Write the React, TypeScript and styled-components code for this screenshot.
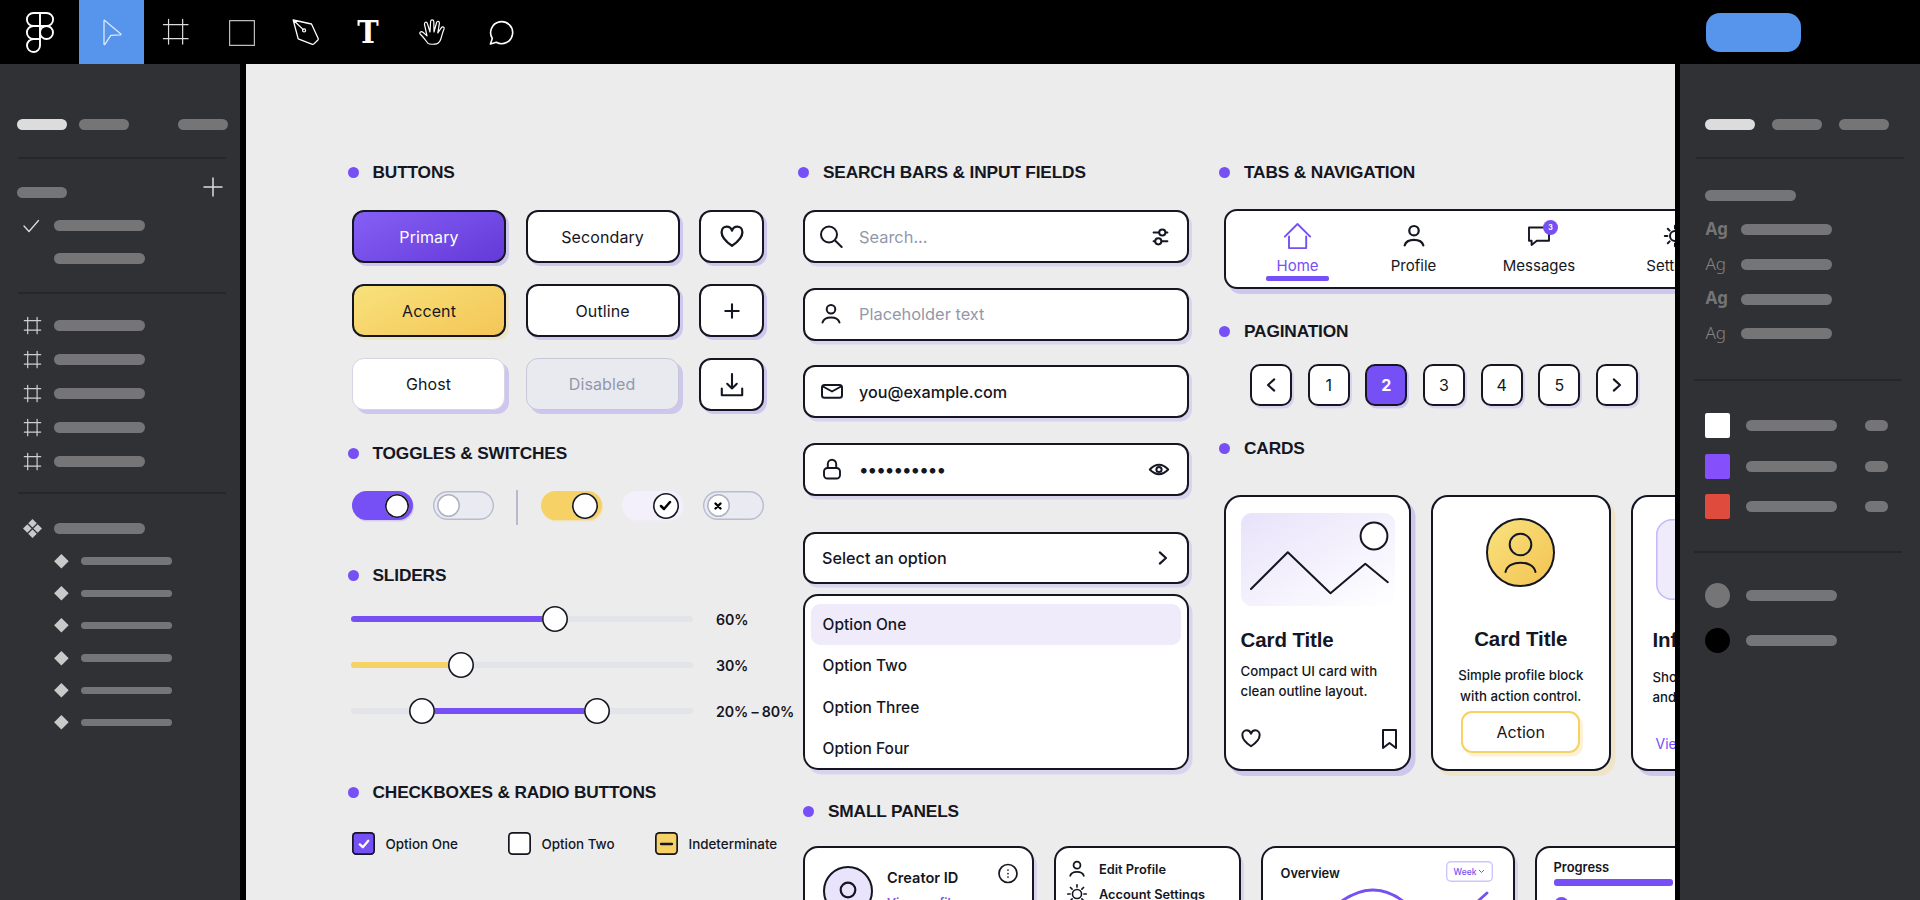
import React from 'react'
import styled, { createGlobalStyle, css } from 'styled-components'

const INK = '#141622'
const VIOLET = '#764ff5'
const LILAC = '#cfc6ee'
const PALE_LILAC = '#d9d3ee'
const YELLOW = '#f6d165'
const SAND = '#f0e4c8'
const MUTED = '#9297ab'

const GlobalStyle = createGlobalStyle`
  * {
    box-sizing: border-box;
  }

  body {
    margin: 0;
    overflow: hidden;
    background: #000;
    color: ${INK};
    font-family: Inter, 'Liberation Sans', sans-serif;
  }

  svg {
    display: block;
    flex: none;
    overflow: visible;
  }
`

/* ---------- shell ---------- */

const Shell = styled.div`
  display: grid;
  grid-template-columns: 240px 1429px 240px;
  grid-template-rows: 64px 836px;
  column-gap: 5.5px;
  width: 1920px;
  height: 900px;
  background: #000;
`

const Toolbar = styled.header`
  grid-column: 1 / -1;
  display: flex;
  align-items: flex-start;
  height: 64px;
  background: #000;
`

const Tool = styled.div<{ $width: number; $active?: boolean }>`
  display: flex;
  align-items: center;
  justify-content: center;
  width: ${p => p.$width}px;
  height: 64px;
  background: ${p => (p.$active ? '#5794ec' : 'transparent')};
`

const TextTool = styled.span`
  color: #fff;
  font-family: 'DejaVu Serif', serif;
  font-stretch: condensed;
  font-size: 32px;
  font-weight: 700;
  line-height: 64px;
`

const ShareButton = styled.div`
  width: 95px;
  height: 39px;
  margin: 12.5px 119.5px 0 auto;
  border-radius: 14px;
  background: #5794ec;
`

const SidePanel = styled.aside<{ $side: 'left' | 'right' }>`
  height: 836px;
  padding: ${p => (p.$side === 'left' ? '55px 12px 0 17px' : '55px 16px 0 25.4px')};
  background: #303134;
`

const Bar = styled.span<{ $width?: number; $height?: number; $bright?: boolean }>`
  display: block;
  flex: none;
  width: ${p => p.$width ?? 91}px;
  height: ${p => p.$height ?? 11}px;
  border-radius: 6px;
  background: ${p => (p.$bright ? '#dcdcdc' : '#757476')};
`

const PanelTabs = styled.div<{ $gap: number }>`
  display: flex;
  gap: ${p => p.$gap}px;

  & > .push {
    margin-left: auto;
  }
`

const PanelRule = styled.hr<{ $top: number; $indent?: number }>`
  width: 208px;
  height: 2px;
  margin: ${p => p.$top}px 0 0 ${p => p.$indent ?? 1}px;
  border: 0;
  background: #26272a;
`

const PanelRows = styled.div<{ $top: number; $row: number; $indent?: number }>`
  display: grid;
  grid-auto-rows: ${p => p.$row}px;
  margin-top: ${p => p.$top}px;
  padding-left: ${p => p.$indent ?? 0}px;
`

const PanelRow = styled.div<{ $icon: number }>`
  display: grid;
  grid-template-columns: ${p => p.$icon}px auto 1fr;
  align-items: center;
`

const PageHeader = styled.div`
  display: flex;
  justify-content: space-between;
  align-items: flex-start;
  height: 20px;
  margin-top: 19px;
  padding-right: 6px;

  & > span {
    margin-top: 9px;
  }
`

const Ag = styled.span<{ $bold?: boolean }>`
  padding-bottom: 2px;
  color: ${p => (p.$bold ? '#757476' : '#858487')};
  font-family: 'Noto Sans', sans-serif;
  font-size: 17px;
  font-weight: ${p => (p.$bold ? 700 : 300)};
  line-height: 20px;
`

const Swatch = styled.span<{ $color: string; $round?: boolean }>`
  width: 25px;
  height: 25px;
  border-radius: ${p => (p.$round ? '50%' : '2px')};
  background: ${p => p.$color};
`

const ShortBar = styled(Bar)`
  margin-left: 28px;
`

/* ---------- canvas ---------- */

const Canvas = styled.main`
  display: flex;
  height: 836px;
  padding: 97px 0 0 102px;
  overflow: hidden;
  background: #ececec;
`

const Column = styled.section<{ $width: number }>`
  flex: none;
  width: ${p => p.$width}px;
`

const Wide = styled.div`
  flex: none;
  width: 1100px;
`

const Split = styled.div`
  display: flex;
  height: 610px;
`

const Title = styled.h2<{ $top?: number }>`
  display: flex;
  align-items: center;
  gap: 14px;
  height: 23px;
  margin: ${p => p.$top ?? 0}px 0 0;
  font-family: 'Liberation Sans', Arial, sans-serif;
  font-size: 17.3px;
  font-weight: 700;
  letter-spacing: -0.16px;
  line-height: 23px;
  white-space: nowrap;

  &::before {
    content: '';
    width: 11px;
    height: 11px;
    border-radius: 50%;
    background: ${VIOLET};
  }
`

const ButtonGrid = styled.div`
  display: grid;
  grid-template-columns: 154px 154px 65px;
  grid-auto-rows: 53px;
  gap: 21px 19.6px;
  margin: 26px 0 0 4.5px;
`

const buttonTones = {
  plain: css`
    background: #fff;
  `,
  primary: css`
    background: linear-gradient(155deg, #8560f5, #6439d8);
    color: #fff;
  `,
  accent: css`
    background: linear-gradient(155deg, #f8e17c, #f4c656);
    box-shadow: 3px 3px 0 ${SAND};
  `,
  ghost: css`
    margin: 0 1px 1px 0;
    border: 1px solid #d7d4e6;
    background: #fff;
    box-shadow: 4px 4px 0 ${LILAC};
  `,
  disabled: css`
    margin: 0 1px 1px 0;
    border: 1px solid #c5c7d6;
    background: #e9eaf0;
    box-shadow: 4px 4px 0 ${LILAC};
    color: ${MUTED};
  `,
}

const Button = styled.div<{ $tone?: keyof typeof buttonTones }>`
  display: flex;
  align-items: center;
  justify-content: center;
  border: 2px solid ${INK};
  border-radius: 12px;
  box-shadow: 3px 3px 0 ${LILAC};
  font-size: 16px;
  letter-spacing: 0.1px;
  ${p => buttonTones[p.$tone ?? 'plain']}
`

const ToggleRow = styled.div`
  display: flex;
  align-items: flex-start;
  height: 29px;
  margin: 26px 0 0 4.5px;
`

const ToggleRule = styled.span`
  width: 1.5px;
  height: 35px;
  margin: -1px 23px 0 2px;
  background: #b8bacb;
`

const Toggle = styled.div<{ $fill: string; $glow: string; $off?: boolean }>`
  display: flex;
  align-items: center;
  justify-content: ${p => (p.$off ? 'flex-start' : 'flex-end')};
  width: 61px;
  height: 29px;
  margin-right: 20px;
  padding: 0 4px;
  border-radius: 15px;
  background: ${p => p.$fill};
  box-shadow: ${p => (p.$off ? 'inset 0 0 0 1.4px #b8bccd' : `1px 1.5px 0 ${p.$glow}`)};
`

const Knob = styled.span<{ $size: number; $dim?: boolean }>`
  display: flex;
  align-items: center;
  justify-content: center;
  flex: none;
  width: ${p => p.$size}px;
  height: ${p => p.$size}px;
  border-radius: 50%;
  background: #fff;
  box-shadow: inset 0 0 0 1.6px ${p => (p.$dim ? '#aeb2c5' : INK)};
`

const Sliders = styled.div`
  margin: 9.5px 0 0 3px;
`

const SliderRow = styled.div`
  display: flex;
  align-items: center;
  gap: 23.5px;
  height: 45.7px;
`

const Track = styled.div`
  position: relative;
  width: 342px;
  height: 6px;
  border-radius: 3px;
  background: #e3e3ea;
`

const Fill = styled.span<{ $color: string }>`
  position: absolute;
  top: 0;
  height: 6px;
  border-radius: 3px;
  background: ${p => p.$color};
`

const Handle = styled(Knob)`
  position: absolute;
  top: -10px;
  transform: translateX(-50%);
`

const SliderValue = styled.span`
  padding-top: 1px;
  font-size: 14.2px;
  font-weight: 600;
  letter-spacing: -0.15px;
  white-space: nowrap;
`

const CheckRow = styled.div`
  display: flex;
  margin: 28px 0 0 4.5px;
`

const CheckItem = styled.label<{ $width: number }>`
  display: flex;
  align-items: center;
  gap: 10.5px;
  width: ${p => p.$width}px;
  font-size: 13.4px;
  font-weight: 500;
  white-space: nowrap;
`

const Box = styled.span<{ $color: string }>`
  display: flex;
  align-items: center;
  justify-content: center;
  width: 23px;
  height: 23px;
  border-radius: 4.5px;
  background: ${p => p.$color};
  box-shadow: inset 0 0 0 1.7px ${INK};
`

/* ---------- inputs ---------- */

const Fields = styled.div`
  display: grid;
  gap: 24.6px;
  width: 386px;
  margin: 26px 0 0 5px;
`

const Field = styled.div`
  display: grid;
  grid-template-columns: 22px 1fr auto;
  column-gap: 16px;
  align-items: center;
  height: 53px;
  padding: 0 19px 0 16px;
  border: 2px solid ${INK};
  border-radius: 12px;
  background: #fff;
  box-shadow: 3px 3.5px 0 ${PALE_LILAC};
`

const FieldText = styled.span<{ $muted?: boolean }>`
  color: ${p => (p.$muted ? MUTED : INK)};
  font-size: ${p => (p.$muted ? 16.4 : 16.2)}px;
  font-weight: ${p => (p.$muted ? 400 : 500)};
`

const Password = styled(FieldText)`
  font-size: 18px;
  letter-spacing: -1px;
`

const Select = styled(Field)`
  grid-template-columns: 1fr auto;
  height: 52px;
  width: 386px;
  margin: 36px 0 0 5px;
  padding: 0 20px 0 17px;
`

const Menu = styled.div`
  width: 386px;
  height: 175.5px;
  margin: 10.5px 0 0 5px;
  padding: 8px 6px;
  border: 2px solid ${INK};
  border-radius: 15px;
  background: #fff;
  box-shadow: 3.5px 4.5px 0 ${PALE_LILAC};
`

const MenuItem = styled.div<{ $selected?: boolean }>`
  display: flex;
  align-items: center;
  height: 41.1px;
  padding-left: 11.5px;
  border-radius: 9px;
  background: ${p => (p.$selected ? '#efebfa' : 'transparent')};
  font-size: 15.5px;
  font-weight: 500;
`

/* ---------- navigation ---------- */

const TabBar = styled.nav`
  display: flex;
  width: 560px;
  height: 80px;
  margin: 25px 0 0 5px;
  padding-left: 8px;
  border: 2px solid ${INK};
  border-radius: 13px;
  background: #fff;
  box-shadow: 4px 5px 0 ${LILAC};
`

const Tab = styled.div<{ $width: number; $active?: boolean }>`
  display: flex;
  flex-direction: column;
  align-items: center;
  width: ${p => p.$width}px;
  color: ${p => (p.$active ? VIOLET : INK)};
  font-size: 15px;
  line-height: 20px;

  &::after {
    content: '';
    width: 63px;
    height: 5px;
    border-radius: 2px;
    background: ${p => (p.$active ? VIOLET : 'transparent')};
  }
`

const TabIcon = styled.span`
  position: relative;
  display: flex;
  align-items: center;
  justify-content: center;
  height: 44.5px;
  padding-top: 6px;
`

const Badge = styled.span`
  position: absolute;
  top: 8.5px;
  right: -8px;
  width: 15px;
  height: 15px;
  border-radius: 50%;
  background: ${VIOLET};
  color: #fff;
  font-size: 7px;
  font-weight: 700;
  line-height: 15px;
  text-align: center;
`

const Pages = styled.div`
  display: flex;
  gap: 15.7px;
  margin: 21px 0 0 31px;
`

const Page = styled.div<{ $active?: boolean }>`
  display: flex;
  align-items: center;
  justify-content: center;
  width: 42px;
  height: 42px;
  border: 2px solid ${INK};
  border-radius: 10px;
  background: ${p => (p.$active ? VIOLET : '#fff')};
  box-shadow: 2px 2.5px 0 ${p => (p.$active ? LILAC : PALE_LILAC)};
  color: ${p => (p.$active ? '#fff' : INK)};
  font-size: 16px;
  font-weight: ${p => (p.$active ? 700 : 400)};
`

/* ---------- cards ---------- */

const Cards = styled.div`
  display: flex;
  gap: 20px;
  margin: 35px 0 0 5px;
`

const Card = styled.article<{ $width: number; $shadow?: string; $center?: boolean }>`
  display: flex;
  flex-direction: column;
  align-items: ${p => (p.$center ? 'center' : 'flex-start')};
  flex: none;
  width: ${p => p.$width}px;
  height: 276px;
  border: 2px solid ${INK};
  border-radius: 17px;
  background: #fff;
  box-shadow: 4.5px 5px 0 ${p => p.$shadow ?? LILAC};
  text-align: ${p => (p.$center ? 'center' : 'left')};
`

const CardTitle = styled.h3<{ $top: number }>`
  margin: ${p => p.$top}px 0 0;
  font-family: 'Liberation Sans', Arial, sans-serif;
  font-size: 20.5px;
  font-weight: 700;
  letter-spacing: -0.1px;
  line-height: 24px;
  white-space: nowrap;
`

const CardText = styled.p<{ $top: number; $leading: number }>`
  margin: ${p => p.$top}px 0 0;
  font-size: 13.25px;
  font-weight: 500;
  line-height: ${p => p.$leading}px;
  white-space: nowrap;
`

const MediaCard = styled(Card)`
  padding: 16px 12px 0 14.5px;
`

const Picture = styled.div`
  width: 154px;
  height: 93px;
  border-radius: 11px;
  background: linear-gradient(150deg, #e8e2fa, #fff);
`

const CardFooter = styled.div`
  display: flex;
  justify-content: space-between;
  width: 156.5px;
  margin-top: 28px;
`

const Avatar = styled.div`
  display: flex;
  align-items: center;
  justify-content: center;
  width: 69px;
  height: 69px;
  margin-top: 21px;
  border: 2px solid ${INK};
  border-radius: 50%;
  background: linear-gradient(135deg, #f9e27e, #f3c352);
`

const ActionButton = styled.div`
  width: 119px;
  height: 42px;
  margin-top: 4.5px;
  border: 2px solid #f6d165;
  border-radius: 11px;
  box-shadow: 3px 3.5px 0 #fdf2d6;
  font-size: 16px;
  line-height: 39px;
`

const InfoCard = styled(Card)`
  padding-left: 20px;
`

const InfoTile = styled.div`
  width: 96px;
  height: 81px;
  margin: 22px 0 0 3px;
  border-radius: 16px;
  background: #efebfa;
  box-shadow: inset 0 0 0 1.5px #c5b9fb;
`

const CardLink = styled.a`
  margin: 26px 0 0 3px;
  color: ${VIOLET};
  font-size: 14px;
  line-height: 20px;
`

/* ---------- small panels ---------- */

const PanelTitle = styled(Title)`
  margin-left: 5px;
`

const SmallPanels = styled.div`
  display: flex;
  gap: 20px;
  margin: 23px 0 0 5px;
`

const SmallPanel = styled.article<{ $width: number; $pad: string }>`
  flex: none;
  width: ${p => p.$width}px;
  height: 150px;
  padding: ${p => p.$pad};
  border: 2px solid ${INK};
  border-radius: 15px;
  background: #fff;
  box-shadow: 3px 5px 0 ${PALE_LILAC};
`

const Creator = styled.div`
  display: grid;
  grid-template-columns: 50px 1fr 20px;
  column-gap: 14px;
  align-items: start;
`

const CreatorAvatar = styled.div`
  display: flex;
  align-items: center;
  justify-content: center;
  width: 50px;
  height: 50px;
  border: 2px solid ${INK};
  border-radius: 50%;
  background: #e9e3fb;
`

const CreatorName = styled.div`
  font-size: 14.6px;
  font-weight: 600;
  line-height: 20px;
  padding-top: 1.5px;

  & > a {
    display: block;
    padding-top: 5px;
    color: ${VIOLET};
    font-size: 12.3px;
  }
`

const MenuLine = styled.div`
  display: grid;
  grid-template-columns: 20px auto;
  column-gap: 12px;
  align-items: center;
  height: 24.7px;
  font-size: 12.8px;
  font-weight: 600;
  white-space: nowrap;

  & > svg {
    justify-self: center;
  }
`

const ChartHead = styled.div`
  display: flex;
  justify-content: space-between;
  align-items: center;
  font-size: 12.9px;
  font-weight: 600;

  & > span:first-child {
    padding-top: 3px;
  }
`

const Chip = styled.span`
  display: flex;
  align-items: center;
  justify-content: center;
  gap: 3px;
  width: 47px;
  height: 21px;
  border-radius: 5px;
  box-shadow: inset 0 0 0 1.4px #cfc5fa;
  color: ${VIOLET};
  font-size: 8.5px;
  font-weight: 500;
`

const ProgressTitle = styled.div`
  font-size: 12.9px;
  font-weight: 600;
  line-height: 16px;
`

const ProgressBar = styled.div`
  width: 119px;
  height: 7px;
  margin-top: 3px;
  border-radius: 3px;
  background: ${VIOLET};
`

const ProgressDot = styled.div`
  width: 15px;
  height: 15px;
  margin: 11px 0 0 0;
  border-radius: 50%;
  background: ${VIOLET};
`

/* ---------- icons ---------- */

interface IconProps {
  w: number;
  h: number;
  box?: string;
  stroke?: string;
  weight?: number;
  fill?: string;
  children: React.ReactNode;
}

const Icon: React.FC<IconProps> = ({ w, h, box, stroke = INK, weight = 2, fill = 'none', children }) => (
  <svg
    width={w}
    height={h}
    viewBox={box ?? `0 0 ${w} ${h}`}
    fill={fill}
    stroke={stroke}
    strokeWidth={weight}
    strokeLinecap="round"
    strokeLinejoin="round"
  >
    {children}
  </svg>
)

const Heart = ({ w = 24, weight = 2.3 }) => (
  <Icon w={w} h={w * 0.92} box="0 0 24 22" weight={weight}>
    <path d="M12 20.7C6 16.7 1.6 12 1.6 7.2c0-3.4 2.4-5.6 5.2-5.6 2.4 0 4.4 1.5 5.2 4 .8-2.5 2.8-4 5.2-4 2.8 0 5.2 2.2 5.2 5.6 0 4.8-4.4 9.5-10.4 13.5z" />
  </Icon>
)

const User = ({ w = 20, weight = 2 }) => (
  <Icon w={w} h={w} box="0 0 20 20" weight={weight}>
    <circle cx="10" cy="5.2" r="4.3" />
    <path d="M1.5 18.5C3.4 11.8 16.6 11.8 18.5 18.5" />
  </Icon>
)

const Sun = ({ w = 20, weight = 1.8 }) => (
  <Icon w={w} h={w} box="0 0 22 22" weight={weight}>
    <circle cx="11" cy="11" r="5" />
    <path d="M11 .8v2.6M11 18.6v2.6M.8 11h2.6M18.6 11h2.6M3.8 3.8l1.8 1.8M16.4 16.4l1.8 1.8M3.8 18.2l1.8-1.8M16.4 5.6l1.8-1.8" />
  </Icon>
)

const FrameIcon = ({ w = 17, weight = 1.2, stroke = '#cfcfcf' }) => (
  <Icon w={w} h={w} box="0 0 17 17" weight={weight} stroke={stroke}>
    <path d="M3.7 .3v16.4M13.1 .3v16.4M.3 3.7h16.4M.3 13.1h16.4" />
  </Icon>
)

const ChevronRight = () => (
  <Icon w={8} h={12} weight={2.1}>
    <path d="M.8 .4L7 6 .8 11.6" />
  </Icon>
)

const ChevronLeft = () => (
  <Icon w={8} h={12} weight={2.1}>
    <path d="M7.2 .4L1 6l6.2 5.6" />
  </Icon>
)

const Diamond = () => (
  <Icon w={15} h={15} stroke="none" fill="#c9c9c9">
    <path d="M7.4 0l7.3 7.3-7.3 7.3L.1 7.3z" />
  </Icon>
)

/* ---------- sections ---------- */

const TopBar = () => (
  <Toolbar>
    <Tool $width={79}>
      <Icon w={28} h={41} stroke="#fff" weight={1.9}>
        <path d="M14 1H7.4a6.5 6.5 0 0 0 0 13H14zM14 1h6.6a6.5 6.5 0 0 1 0 13H14zM14 14H7.4a6.5 6.5 0 0 0 0 13H14zM14 27H7.4a6.5 6.5 0 1 0 6.6 6.5z" />
        <circle cx="20.5" cy="20.5" r="6.5" />
      </Icon>
    </Tool>
    <Tool $width={64.5} $active>
      <Icon w={16} h={25} stroke="#dce9fc" weight={1.3}>
        <path d="M1 .5v23.800q.3.7.9 0L7.800 15.300l9.600-.5q.9-.2.4-.9L1.800.4Q1.200 0 1 .5z" />
      </Icon>
    </Tool>
    <Tool $width={65}>
      <FrameIcon w={25.5} weight={0.8} stroke="#dcdcdc" />
    </Tool>
    <Tool $width={67.5}>
      <Icon w={26} h={25} stroke="#bdbdbd" weight={1.2}>
        <path d="M.6 .6h24.800v24.800H.6z" />
      </Icon>
    </Tool>
    <Tool $width={58.5}>
      <Icon w={27} h={26} stroke="#fff" weight={1.3}>
        <path d="M1.200 1l18.300 4 6.700 14.600q.3.8-.3 1.400l-4.200 4.100q-.6.5-1.300.2L6.200 19.800zM1.200 1l9.800 9.400" />
        <circle cx="12.100" cy="11.400" r="1.500" />
      </Icon>
    </Tool>
    <Tool $width={67}>
      <TextTool>T</TextTool>
    </Tool>
    <Tool $width={61}>
      <Icon w={26} h={26} stroke="#fff" weight={1.2}>
        <path d="M9 24.4C7 22 5 18.6 1.1 15 0 13.200 2 11.800 4 13.300l4 3.600L5.500 5.500C5 2.800 7.800 2.400 8.400 4.600L11 13l.6-10.500C11.700.3 14.600.3 14.800 2.500L15 13l2.600-9.500c.6-2 3.200-1.500 2.800.9L18.800 14l3.600-5.400C23.600 7 25.800 8 25 10c-1.500 3.500-2 6-3 9.500-1 3.500-3 5.700-6.500 5.700-3 0-5 .4-6.500-.8z" />
      </Icon>
    </Tool>
    <Tool $width={76}>
      <Icon w={24} h={25} stroke="#fff" weight={1.6}>
        <path d="M3.300 18.500A11 11 0 1 1 7.300 22.300L1.400 24l1.900-5.500z" />
      </Icon>
    </Tool>
    <ShareButton />
  </Toolbar>
)

const LayersPanel = () => (
  <SidePanel $side="left">
    <PanelTabs $gap={12}>
      <Bar $width={50} $bright />
      <Bar $width={50} />
      <Bar $width={50} className="push" />
    </PanelTabs>
    <PanelRule $top={27} />
    <PageHeader>
      <Bar $width={50} />
      <Icon w={18} h={18} stroke="#dcdcdc" weight={1.5}>
        <path d="M9 0v18M0 9h18" />
      </Icon>
    </PageHeader>
    <PanelRows $top={11} $row={33.3} $indent={6}>
      <PanelRow $icon={31}>
        <Icon w={16} h={12} stroke="#dcdcdc" weight={1.3}>
          <path d="M1 6l5 5.500L15.500 .5" />
        </Icon>
        <Bar />
      </PanelRow>
      <PanelRow $icon={31}>
        <span />
        <Bar />
      </PanelRow>
    </PanelRows>
    <PanelRule $top={16.4} />
    <PanelRows $top={15} $row={33.8} $indent={7}>
      {[1, 2, 3, 4, 5].map(n => (
        <PanelRow key={n} $icon={30}>
          <FrameIcon />
          <Bar />
        </PanelRow>
      ))}
    </PanelRows>
    <PanelRule $top={14.5} />
    <PanelRows $top={18} $row={32.5} $indent={5.5}>
      <PanelRow $icon={31.5}>
        <Icon w={19} h={19} stroke="none" fill="#c9c9c9">
          <path d="M9.500 0l4.300 4.300-4.300 4.300-4.300-4.300zM9.500 10.400l4.300 4.300-4.300 4.300-4.300-4.300zM4.300 5.200l4.300 4.300-4.300 4.300L0 9.500zM14.700 5.200L19 9.500l-4.300 4.300-4.300-4.300z" />
        </Icon>
        <Bar />
      </PanelRow>
    </PanelRows>
    <PanelRows $top={0} $row={32.3} $indent={36.5}>
      {[1, 2, 3, 4, 5, 6].map(n => (
        <PanelRow key={n} $icon={27}>
          <Diamond />
          <Bar $height={7.5} />
        </PanelRow>
      ))}
    </PanelRows>
  </SidePanel>
)

const StylesPanel = () => (
  <SidePanel $side="right">
    <PanelTabs $gap={17}>
      <Bar $width={50} $bright />
      <Bar $width={50} />
      <Bar $width={50} />
    </PanelTabs>
    <PanelRule $top={27} $indent={-9} />
    <PanelRows $top={20.5} $row={32}>
      <PanelRow $icon={0}>
        <span />
        <Bar />
      </PanelRow>
    </PanelRows>
    <PanelRows $top={1} $row={34.7}>
      {[true, false, true, false].map((bold, i) => (
        <PanelRow key={i} $icon={36}>
          <Ag $bold={bold}>Ag</Ag>
          <Bar />
        </PanelRow>
      ))}
    </PanelRows>
    <PanelRule $top={28} $indent={-11.5} />
    <PanelRows $top={24} $row={40.5}>
      {['#fff', '#854ffb', '#df4b3c'].map(color => (
        <PanelRow key={color} $icon={40.5}>
          <Swatch $color={color} />
          <Bar />
          <ShortBar $width={23} />
        </PanelRow>
      ))}
    </PanelRows>
    <PanelRule $top={24} $indent={-11.5} />
    <PanelRows $top={20.5} $row={45}>
      {['#757476', '#000'].map(color => (
        <PanelRow key={color} $icon={40.5}>
          <Swatch $color={color} $round />
          <Bar />
        </PanelRow>
      ))}
    </PanelRows>
  </SidePanel>
)

const sliders = [
  { label: '60%', from: 0, to: 59.8, color: VIOLET },
  { label: '30%', from: 0, to: 32.3, color: YELLOW },
  { label: '20% – 80%', from: 20.8, to: 72.2, color: VIOLET },
]

const Controls = () => (
  <Column $width={450.5}>
    <Title>BUTTONS</Title>
    <ButtonGrid>
      <Button $tone="primary">Primary</Button>
      <Button>Secondary</Button>
      <Button>
        <Heart />
      </Button>
      <Button $tone="accent">Accent</Button>
      <Button>Outline</Button>
      <Button>
        <Icon w={14} h={14} weight={2.1}>
          <path d="M7 .3v13.400M.3 7h13.400" />
        </Icon>
      </Button>
      <Button $tone="ghost">Ghost</Button>
      <Button $tone="disabled">Disabled</Button>
      <Button>
        <Icon w={22} h={23} weight={2.1}>
          <path d="M11 1v14.500M6.200 10.800L11 15.500l4.800-4.700M.8 15.500v6.700h20.400v-6.700" />
        </Icon>
      </Button>
    </ButtonGrid>

    <Title $top={31}>TOGGLES &amp; SWITCHES</Title>
    <ToggleRow>
      <Toggle $fill={VIOLET} $glow="#d5cdf2">
        <Knob $size={24} />
      </Toggle>
      <Toggle $fill="#eaebf2" $glow="none" $off>
        <Knob $size={23} $dim />
      </Toggle>
      <ToggleRule />
      <Toggle $fill={YELLOW} $glow="#f2e2b8">
        <Knob $size={26} />
      </Toggle>
      <Toggle $fill="#f3f0fc" $glow="#efedf4">
        <Knob $size={26}>
          <Icon w={11} h={9} weight={2.5} stroke="#000">
            <path d="M1 5l3 3 6-7" />
          </Icon>
        </Knob>
      </Toggle>
      <Toggle $fill="#eaebf2" $glow="none" $off>
        <Knob $size={23} $dim>
          <Icon w={6} h={6} weight={2.3} stroke="#000">
            <path d="M.5 .5l5 5M5.500 .5l-5 5" />
          </Icon>
        </Knob>
      </Toggle>
    </ToggleRow>

    <Title $top={44}>SLIDERS</Title>
    <Sliders>
      {sliders.map(s => (
        <SliderRow key={s.label}>
          <Track>
            <Fill $color={s.color} style={{ left: `${s.from}%`, width: `${s.to - s.from}%` }} />
            {s.from > 0 && <Handle $size={26} style={{ left: `${s.from}%` }} />}
            <Handle $size={26} style={{ left: `${s.to}%` }} />
          </Track>
          <SliderValue>{s.label}</SliderValue>
        </SliderRow>
      ))}
    </Sliders>

    <Title $top={47.5}>CHECKBOXES &amp; RADIO BUTTONS</Title>
    <CheckRow>
      <CheckItem $width={156}>
        <Box $color={VIOLET}>
          <Icon w={10} h={8} stroke="#fff" weight={2.3}>
            <path d="M.8 4.400L3.800 7.200 9.300 .8" />
          </Icon>
        </Box>
        Option One
      </CheckItem>
      <CheckItem $width={147}>
        <Box $color="#fff" />
        Option Two
      </CheckItem>
      <CheckItem $width={130}>
        <Box $color={YELLOW}>
          <Icon w={11} h={2} weight={2.3}>
            <path d="M0 1h11" />
          </Icon>
        </Box>
        Indeterminate
      </CheckItem>
    </CheckRow>
  </Column>
)

const Inputs = () => (
  <Column $width={421}>
    <Title>SEARCH BARS &amp; INPUT FIELDS</Title>
    <Fields>
      <Field>
        <Icon w={22} h={22} weight={2}>
          <circle cx="8" cy="8.500" r="8" />
          <path d="M14.300 14.800l6.400 6.200" />
        </Icon>
        <FieldText $muted>Search...</FieldText>
        <Icon w={15} h={16} weight={2}>
          <path d="M.6 3.500h5M12.800 3.500h1.600M.6 12.300h1M8.800 12.300h5.600" />
          <circle cx="9.300" cy="3.500" r="3.100" />
          <circle cx="5.300" cy="12.300" r="3.100" />
        </Icon>
      </Field>
      <Field>
        <User />
        <FieldText $muted>Placeholder text</FieldText>
      </Field>
      <Field>
        <Icon w={22} h={15} weight={2}>
          <rect x="1" y="1" width="20" height="12.800" rx="2.500" />
          <path d="M2 2.500l9 5 9-5" />
        </Icon>
        <FieldText>you@example.com</FieldText>
      </Field>
      <Field>
        <Icon w={22} h={20} weight={1.9}>
          <rect x="3" y="9" width="16" height="10.500" rx="3.500" />
          <path d="M6.800 9V5a4.200 4.200 0 0 1 8.400 0v4" />
        </Icon>
        <Password>••••••••••</Password>
        <Icon w={19} h={11} weight={2}>
          <path d="M.8 5.500Q10-3.800 19.200 5.500 10 14.800.8 5.500z" />
          <circle cx="10" cy="5.500" r="2.600" />
        </Icon>
      </Field>
    </Fields>
    <Select>
      <FieldText>Select an option</FieldText>
      <ChevronRight />
    </Select>
    <Menu>
      <MenuItem $selected>Option One</MenuItem>
      <MenuItem>Option Two</MenuItem>
      <MenuItem>Option Three</MenuItem>
      <MenuItem>Option Four</MenuItem>
    </Menu>
  </Column>
)

const Navigation = () => (
  <Column $width={600}>
    <Title>TABS &amp; NAVIGATION</Title>
    <TabBar>
      <Tab $width={127} $active>
        <TabIcon>
          <Icon w={27} h={26} stroke={VIOLET} weight={1.9}>
            <path d="M.8 13.600L13.500 1l12.700 12.600M5 13.500v11.600h17.200V13.500" />
          </Icon>
        </TabIcon>
        Home
      </Tab>
      <Tab $width={105}>
        <TabIcon>
          <User w={22} />
        </TabIcon>
        Profile
      </Tab>
      <Tab $width={146}>
        <TabIcon>
          <Icon w={22} h={20} weight={1.9}>
            <path d="M1 1.500h20v13.300H8.800L3.600 19v-4.200H1z" />
          </Icon>
          <Badge>3</Badge>
        </TabIcon>
        Messages
      </Tab>
      <Tab $width={126}>
        <TabIcon>
          <Sun w={22} weight={2} />
        </TabIcon>
        Settings
      </Tab>
    </TabBar>

    <Title $top={31}>PAGINATION</Title>
    <Pages>
      <Page>
        <ChevronLeft />
      </Page>
      <Page>1</Page>
      <Page $active>2</Page>
      <Page>3</Page>
      <Page>4</Page>
      <Page>5</Page>
      <Page>
        <ChevronRight />
      </Page>
    </Pages>

    <Title $top={31}>CARDS</Title>
    <Cards>
      <MediaCard $width={187}>
        <Picture>
          <Icon w={154} h={93} weight={2}>
            <circle cx="133" cy="23" r="13.400" fill="#fff" />
            <path d="M10 76L46.800 39.200l42.700 41 34.800-29.500 22.500 18.500" />
          </Icon>
        </Picture>
        <CardTitle $top={21.5}>Card Title</CardTitle>
        <CardText $top={9.5} $leading={20}>
          Compact UI card with
          <br />
          clean outline layout.
        </CardText>
        <CardFooter>
          <Heart w={20} weight={2.4} />
          <Icon w={15} h={20} weight={2}>
            <path d="M1 1h13v18l-6.500-5L1 19z" />
          </Icon>
        </CardFooter>
      </MediaCard>
      <Card $width={179.5} $shadow={SAND} $center>
        <Avatar>
          <Icon w={33} h={42} weight={2}>
            <circle cx="16.500" cy="12.500" r="10.800" />
            <path d="M1.500 40C4 27.500 29 27.500 31.500 40" />
          </Icon>
        </Avatar>
        <CardTitle $top={40}>Card Title</CardTitle>
        <CardText $top={14} $leading={20.9}>
          Simple profile block
          <br />
          with action control.
        </CardText>
        <ActionButton>Action</ActionButton>
      </Card>
      <InfoCard $width={187}>
        <InfoTile />
        <CardTitle $top={28}>Info Card</CardTitle>
        <CardText $top={14.5} $leading={20.9}>
          Short message
          <br />
          and details.
        </CardText>
        <CardLink>View more</CardLink>
      </InfoCard>
    </Cards>
  </Column>
)

const Panels = () => (
  <>
    <PanelTitle $top={29}>SMALL PANELS</PanelTitle>
    <SmallPanels>
      <SmallPanel $width={231} $pad="18px 14px 0 18px">
        <Creator>
          <CreatorAvatar>
            <Icon w={18} h={18} weight={2.2}>
              <circle cx="9" cy="8" r="7.300" />
            </Icon>
          </CreatorAvatar>
          <CreatorName>
            Creator ID
            <a>View profile</a>
          </CreatorName>
          <Icon w={20} h={20} weight={1.7}>
            <circle cx="10" cy="7.500" r="9" />
            <path d="M10 4v.1M10 7.500v.1M10 11v.1" />
          </Icon>
        </Creator>
      </SmallPanel>
      <SmallPanel $width={187} $pad="9px 10px 0 11px">
        <MenuLine>
          <User w={16} weight={2.2} />
          Edit Profile
        </MenuLine>
        <MenuLine>
          <Sun w={20} />
          Account Settings
        </MenuLine>
      </SmallPanel>
      <SmallPanel $width={253.5} $pad="13px 20px 0 17.5px">
        <ChartHead>
          <span>Overview</span>
          <Chip>
            Week
            <Icon w={5} h={3} stroke={VIOLET} weight={1}>
              <path d="M.3 .3l2.200 2.200L4.700 .3" />
            </Icon>
          </Chip>
        </ChartHead>
        <Icon w={210} h={60} stroke={VIOLET} weight={2.8}>
          <path d="M42 35C76 0 108-2 138 35M187 28L206 11" />
        </Icon>
      </SmallPanel>
      <SmallPanel $width={187} $pad="12px 18px 0 17px">
        <ProgressTitle>Progress</ProgressTitle>
        <ProgressBar />
        <ProgressDot />
      </SmallPanel>
    </SmallPanels>
  </>
)

const App: React.FC = () => {
  return (
    <Shell>
      <GlobalStyle />
      <TopBar />
      <LayersPanel />
      <Canvas>
        <Controls />
        <Wide>
          <Split>
            <Inputs />
            <Navigation />
          </Split>
          <Panels />
        </Wide>
      </Canvas>
      <StylesPanel />
    </Shell>
  )
}

export default App
